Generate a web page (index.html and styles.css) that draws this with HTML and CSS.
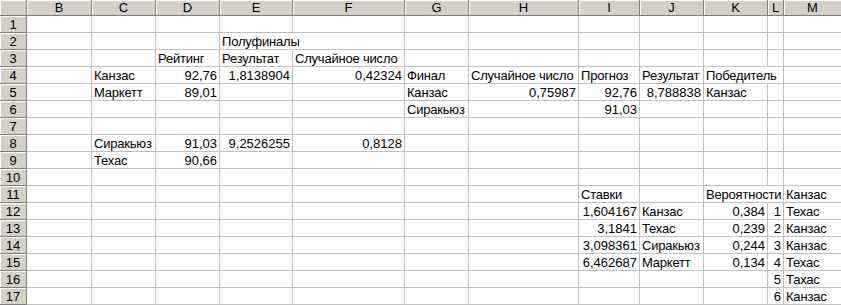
FILE: index.html
```html
<!DOCTYPE html>
<html lang="ru">
<head>
    <meta charset="UTF-8">
    <title>Прогноз</title>
    <link rel="stylesheet" href="styles.css">
</head>
<body>
    <div class="sheet">
        <div class="hd"></div><div class="hd">B</div><div class="hd">C</div><div class="hd">D</div><div class="hd">E</div><div class="hd">F</div><div class="hd">G</div><div class="hd">H</div><div class="hd">I</div><div class="hd">J</div><div class="hd">K</div><div class="hd">L</div><div class="hd">M</div>

        <div class="rh">1</div><div></div><div></div><div></div><div></div><div></div><div></div><div></div><div></div><div></div><div></div><div></div><div></div>
        <div class="rh">2</div><div></div><div></div><div></div><div class="sp">Полуфиналы</div><div></div><div></div><div></div><div></div><div></div><div></div><div></div><div></div>
        <div class="rh">3</div><div></div><div></div><div>Рейтинг</div><div>Результат</div><div>Случайное число</div><div></div><div></div><div></div><div></div><div></div><div></div><div></div>
        <div class="rh">4</div><div></div><div>Канзас</div><div class="n">92,76</div><div class="n">1,8138904</div><div class="n">0,42324</div><div>Финал</div><div>Случайное число</div><div>Прогноз</div><div>Результат</div><div class="sp">Победитель</div><div></div><div></div>
        <div class="rh">5</div><div></div><div>Маркетт</div><div class="n">89,01</div><div></div><div></div><div>Канзас</div><div class="n">0,75987</div><div class="n">92,76</div><div class="n">8,788838</div><div>Канзас</div><div></div><div></div>
        <div class="rh">6</div><div></div><div></div><div></div><div></div><div></div><div>Сиракьюз</div><div></div><div class="n">91,03</div><div></div><div></div><div></div><div></div>
        <div class="rh">7</div><div></div><div></div><div></div><div></div><div></div><div></div><div></div><div></div><div></div><div></div><div></div><div></div>
        <div class="rh">8</div><div></div><div>Сиракьюз</div><div class="n">91,03</div><div class="n">9,2526255</div><div class="n">0,8128</div><div></div><div></div><div></div><div></div><div></div><div></div><div></div>
        <div class="rh">9</div><div></div><div>Техас</div><div class="n">90,66</div><div></div><div></div><div></div><div></div><div></div><div></div><div></div><div></div><div></div>
        <div class="rh">10</div><div></div><div></div><div></div><div></div><div></div><div></div><div></div><div></div><div></div><div></div><div></div><div></div>
        <div class="rh">11</div><div></div><div></div><div></div><div></div><div></div><div></div><div></div><div>Ставки</div><div></div><div class="sp">Вероятности</div><div></div><div>Канзас</div>
        <div class="rh">12</div><div></div><div></div><div></div><div></div><div></div><div></div><div></div><div class="n">1,604167</div><div>Канзас</div><div class="n">0,384</div><div class="n">1</div><div>Техас</div>
        <div class="rh">13</div><div></div><div></div><div></div><div></div><div></div><div></div><div></div><div class="n">3,1841</div><div>Техас</div><div class="n">0,239</div><div class="n">2</div><div>Канзас</div>
        <div class="rh">14</div><div></div><div></div><div></div><div></div><div></div><div></div><div></div><div class="n">3,098361</div><div>Сиракьюз</div><div class="n">0,244</div><div class="n">3</div><div>Канзас</div>
        <div class="rh">15</div><div></div><div></div><div></div><div></div><div></div><div></div><div></div><div class="n">6,462687</div><div>Маркетт</div><div class="n">0,134</div><div class="n">4</div><div>Техас</div>
        <div class="rh">16</div><div></div><div></div><div></div><div></div><div></div><div></div><div></div><div></div><div></div><div></div><div class="n">5</div><div>Тахас</div>
        <div class="rh">17</div><div></div><div></div><div></div><div></div><div></div><div></div><div></div><div></div><div></div><div></div><div class="n">6</div><div>Канзас</div>
    </div>
</body>
</html>
```

FILE: styles.css
```css
body {
    margin: 0;
    background: #fff;
    overflow: hidden;
    font: 13px "Liberation Sans", Arial, sans-serif;
    color: #000;
}
.sheet {
    display: grid;
    grid-template-columns: 27px 65px 64px 64px 73px 112px 64px 110px 61px 64px 64px 16px 58px;
    grid-template-rows: 16px;
    grid-auto-rows: 17px;
}
.sheet > div {
    box-sizing: border-box;
    border-right: 1px solid #c0c0c0;
    border-bottom: 1px solid #c0c0c0;
    padding: 2px 2px 0 2px;
    line-height: 14px;
    letter-spacing: -0.2px;
    white-space: nowrap;
    overflow: hidden;
}
/* column letters and row numbers */
.sheet > .hd,
.sheet > .rh {
    background: #d4d0c8;
    border-color: #808080;
    box-shadow: inset 1px 1px #fff;
    text-align: center;
    letter-spacing: 0;
    padding: 1px 0 0;
}
.sheet > .rh {
    padding-top: 2px;
}
.sheet > .n {
    text-align: right;
    letter-spacing: 0;
}
/* text running over into the empty cell on its right */
.sheet > .sp {
    overflow: visible;
    border-right-color: transparent;
}
```
